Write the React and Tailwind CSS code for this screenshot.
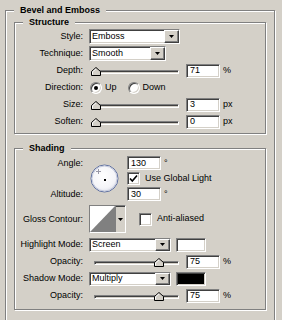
import React from 'react'

const sunken = 'border border-t-[#808080] border-l-[#808080] border-b-white border-r-white shadow-[inset_1px_1px_0_#404040,inset_-1px_-1px_0_#d4d0c8]'
const raised = 'border border-t-white border-l-white border-b-[#404040] border-r-[#404040] shadow-[inset_-1px_-1px_0_#808080]'
const etched = 'border border-[#808080] shadow-[inset_1px_1px_0_#fff,1px_1px_0_#fff]'

function Arrow() {
  return (
    <svg width="5" height="3" viewBox="0 0 5 3"><path d="M0 0h5L2.5 3z" fill="#000" /></svg>
  )
}

function Select({ value, w, h = 'h-[15px]' }) {
  return (
    <div className={`${sunken} ${w} ${h} bg-white flex items-stretch`}>
      <div className="flex-1 pl-[2px] flex items-center leading-none">{value}</div>
      <div className={`${raised} w-[15px] bg-[#d4d0c8] flex items-center justify-center`}><Arrow /></div>
    </div>
  )
}

function Field({ value, unit }) {
  return (
    <div className="flex items-center">
      <div className={`${sunken} w-[34px] h-[14px] bg-white pl-[3px] flex items-center leading-none`}>{value}</div>
      <span className="ml-[3px] leading-none">{unit}</span>
    </div>
  )
}

function Slider({ pos }) {
  return (
    <div className="relative w-[88px] h-[10px] ml-[2px]">
      <div className="absolute left-[3px] right-0 top-[4px] h-[4px] border border-t-[#808080] border-l-[#808080] border-b-white border-r-white shadow-[inset_1px_1px_0_#404040]" />
      <svg className="absolute top-[1px]" style={{ left: pos }} width="10" height="9" viewBox="0 0 10 9">
        <path d="M0.5 8.5V4.5L5 0.5L9.5 4.5V8.5Z" fill="#d4d0c8" stroke="#000" />
        <path d="M1.5 7.5V4.9L5 1.8" fill="none" stroke="#fff" />
      </svg>
    </div>
  )
}

function Label({ children }) {
  return <div className="w-[69px] text-right pr-[1px] leading-none shrink-0">{children}</div>
}

function Row({ label, children }) {
  return (
    <div className="h-[17px] flex items-center gap-[5px]">
      <Label>{label}</Label>
      {children}
    </div>
  )
}

function Radio({ on }) {
  return (
    <div className={`${sunken} w-[12px] h-[12px] rounded-full bg-white flex items-center justify-center`}>
      {on && <div className="w-[4px] h-[4px] rounded-full bg-black" />}
    </div>
  )
}

function Check({ on }) {
  return (
    <div className={`${sunken} w-[13px] h-[13px] bg-white flex items-center justify-center`}>
      {on && (
        <svg width="9" height="9" viewBox="0 0 9 9"><path d="M1 4.5L3.3 7L8 1.5" fill="none" stroke="#000" strokeWidth="1.6" /></svg>
      )}
    </div>
  )
}

function Group({ title, className, children }) {
  return (
    <div className={`relative ${etched} ${className}`}>
      <div className="absolute top-[-7px] left-[8px] px-[6px] bg-[#d4d0c8] font-bold leading-[12px]">{title}</div>
      {children}
    </div>
  )
}

export default function App() {
  return (
    <div className="w-[282px] h-[320px] bg-[#d4d0c8] overflow-hidden pl-[5px] pt-[10px] text-[9px] text-black" style={{ fontFamily: '"Liberation Sans", Arial, sans-serif' }}>
      <Group title="Bevel and Emboss" className="w-[270px] h-[330px] pl-[8px] pt-[11px]">
        <Group title="Structure" className="w-[252px] h-[112px] pt-[5px]">
          <Row label="Style:"><Select value="Emboss" w="w-[91px]" /></Row>
          <Row label="Technique:"><Select value="Smooth" w="w-[77px]" /></Row>
          <Row label="Depth:">
            <Slider pos={0} />
            <div className="ml-[2px]"><Field value="71" unit="%" /></div>
          </Row>
          <Row label="Direction:">
            <div className="ml-[1px] flex items-center gap-[3px]"><Radio on /><span>Up</span></div>
            <div className="ml-[6px] flex items-center gap-[3px]"><Radio /><span>Down</span></div>
          </Row>
          <Row label="Size:">
            <Slider pos={0} />
            <div className="ml-[2px]"><Field value="3" unit="px" /></div>
          </Row>
          <Row label="Soften:">
            <Slider pos={0} />
            <div className="ml-[2px]"><Field value="0" unit="px" /></div>
          </Row>
        </Group>

        <Group title="Shading" className="w-[252px] h-[162px] mt-[14px] pt-[7px]">
          <div className="flex items-center gap-[5px]">
            <div className="w-[69px] h-[45px] flex flex-col justify-between text-right pr-[1px] leading-none">
              <div className="h-[14px] flex items-center justify-end">Angle:</div>
              <div className="h-[14px] flex items-center justify-end">Altitude:</div>
            </div>
            <svg width="31" height="29" viewBox="0 0 31 29">
              <defs>
                <radialGradient id="dial" cx="0.45" cy="0.4" r="0.65">
                  <stop offset="0" stopColor="#ffffff" />
                  <stop offset="0.7" stopColor="#f4f4f8" />
                  <stop offset="1" stopColor="#d8dae6" />
                </radialGradient>
              </defs>
              <circle cx="15.5" cy="14.5" r="13.5" fill="url(#dial)" stroke="#5d6e9e" />
              <circle cx="15.5" cy="14.5" r="12.5" fill="none" stroke="#c5cadc" />
              <rect x="15" y="15" width="2" height="2" fill="#000" />
              <path d="M9.5 5v5M7 7.5h5" stroke="#9a9aa8" />
            </svg>
            <div className="ml-[2px] flex flex-col">
              <div className="h-[14px] flex items-center"><Field value="130" unit="°" /></div>
              <div className="h-[17px] flex items-center gap-[5px]"><Check on /><span>Use Global Light</span></div>
              <div className="h-[14px] flex items-center"><Field value="30" unit="°" /></div>
            </div>
          </div>

          <div className="mt-[4px] h-[28px] flex items-center gap-[5px]">
            <Label>Gloss Contour:</Label>
            <div className={`${sunken} w-[37px] h-[28px] bg-[#d4d0c8] flex`}>
              <svg width="25" height="26" viewBox="0 0 25 26" className="bg-white">
                <path d="M0 26L25 0V26Z" fill="#808080" />
              </svg>
              <div className="flex-1 border-l border-[#808080] flex items-center justify-center"><Arrow /></div>
            </div>
            <div className="ml-[8px] flex items-center gap-[5px]"><Check /><span>Anti-aliased</span></div>
          </div>

          <div className="mt-[3px]">
            <Row label="Highlight Mode:">
              <Select value="Screen" w="w-[82px]" h="h-[14px]" />
              <div className={`${sunken} w-[30px] h-[14px] bg-white`} />
            </Row>
            <Row label="Opacity:">
              <Slider pos={63} />
              <div className="ml-[2px]"><Field value="75" unit="%" /></div>
            </Row>
            <Row label="Shadow Mode:">
              <Select value="Multiply" w="w-[82px]" h="h-[14px]" />
              <div className={`${sunken} w-[30px] h-[14px] bg-black`} />
            </Row>
            <Row label="Opacity:">
              <Slider pos={63} />
              <div className="ml-[2px]"><Field value="75" unit="%" /></div>
            </Row>
          </div>
        </Group>
      </Group>
    </div>
  )
}
